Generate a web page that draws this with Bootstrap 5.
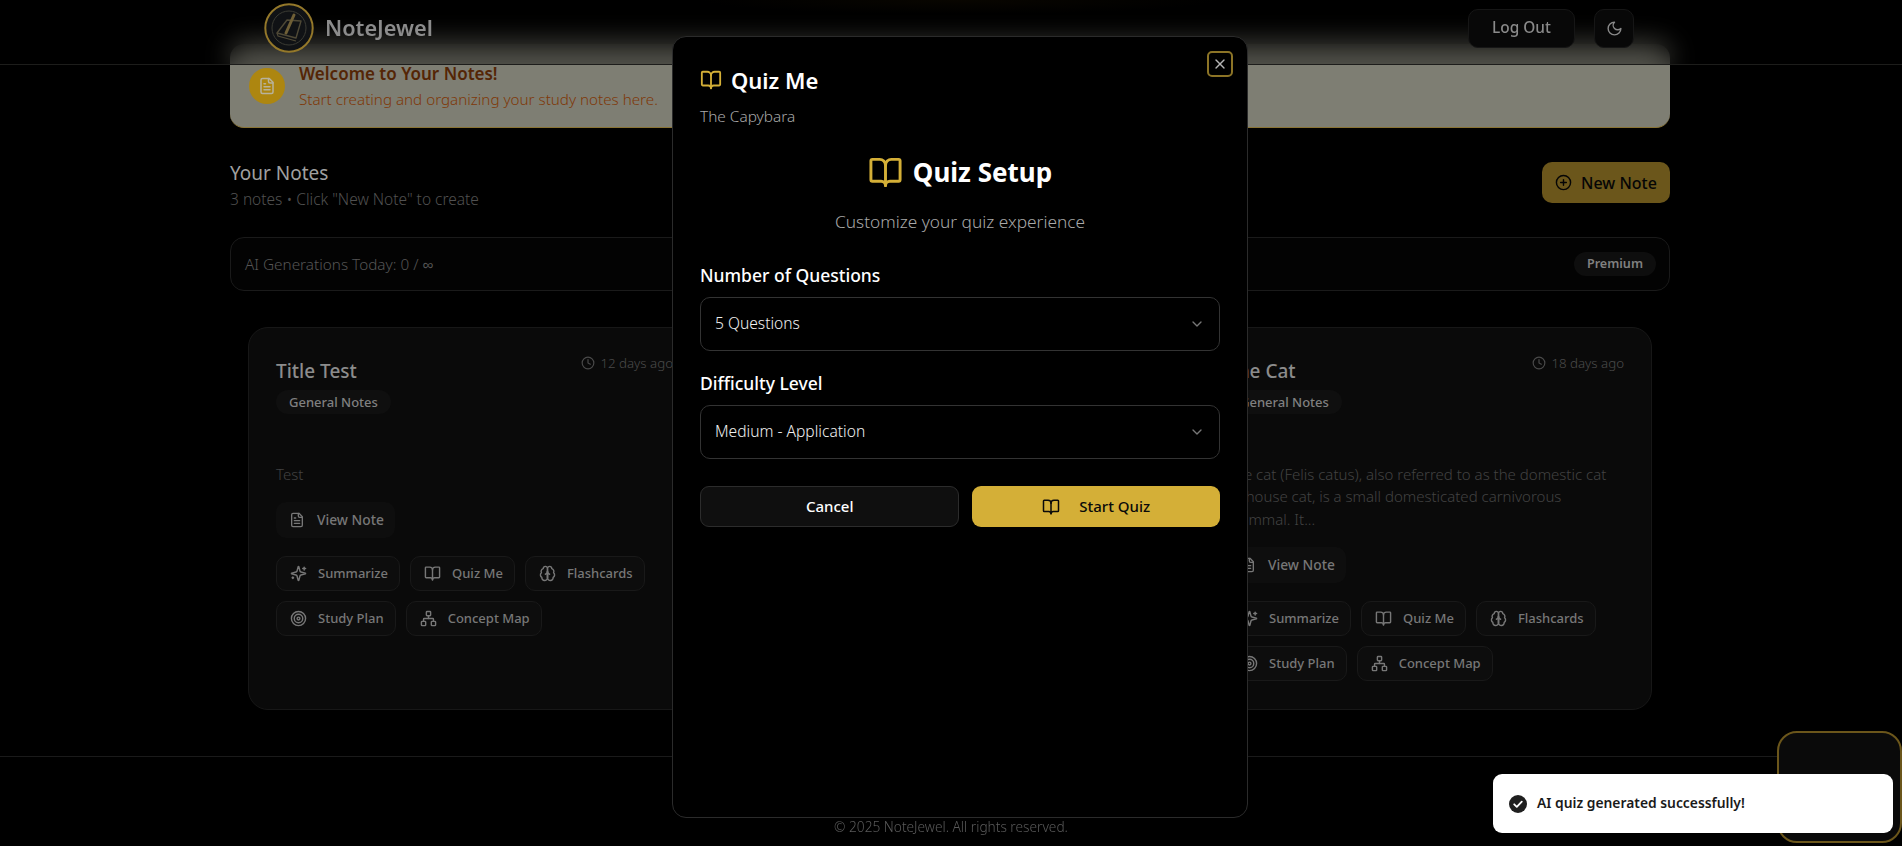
<!DOCTYPE html>
<html lang="en">
<head>
<meta charset="utf-8">
<title>NoteJewel</title>
<link href="https://cdn.jsdelivr.net/npm/bootstrap@5.3.0/dist/css/bootstrap.min.css" rel="stylesheet">
<style>
html,body{height:846px;overflow:hidden;background:#000;}
body{font-family:"Noto Sans",sans-serif;color:#aaa;}
svg.ic{fill:none;stroke:currentColor;stroke-width:2;stroke-linecap:round;stroke-linejoin:round;flex:none;}
.topbar{position:fixed;top:0;left:0;right:0;height:65px;z-index:10;background:radial-gradient(ellipse 260px 14px at 960px 0,rgba(60,40,0,.14),transparent),rgba(0,0,0,.35);backdrop-filter:blur(14px);border-bottom:1px solid #1d1d1b;padding:0 268px 8px 264px;}
.brand-text{font-size:21.7px;font-weight:600;color:#8c8c8c;margin-left:11px;}
.top-btn{height:39px;background:#080808;border:1px solid #161616;border-radius:10px;color:#8a8a8a;font-size:15.4px;font-weight:500;}
.logout{width:107px;}.moon{width:40px;margin-left:19px;}
.page-wrap{width:1440px;margin-left:230px;padding-top:44px;}
.welcome{height:84px;background:#7e7e73;border-bottom:1px solid #8a7434;border-radius:14px;padding:0 19px;gap:14px;}
.welcome-dot{width:36px;height:36px;border-radius:50%;background:#ad8610;color:#b8b29c;}
.welcome h2{font-size:17px;font-weight:600;color:#542505;margin:0 0 2px;line-height:24px;}
.welcome p{font-size:15.2px;font-weight:300;color:#7e3808;margin:0;line-height:22px;}
.head-row{margin-top:31px;height:78px;}
.notes-title{font-size:19px;font-weight:400;color:#a0a0a0;line-height:28px;margin:0;}
.notes-sub{font-size:15.5px;font-weight:300;color:#505050;margin:0;line-height:22px;margin-top:1px;}
.new-note{width:128px;height:41px;background:#6b561b;color:#050505;border-radius:10px;font-size:16px;font-weight:500;gap:9px;margin-top:3px;}
.stat-bar{height:54px;background:#030303;border:1px solid #1a1a1a;border-radius:14px;padding:0 13px 0 14px;font-size:15.3px;font-weight:300;color:#555;}
.prem{background:#0e0e0e;color:#808080;font-size:12.6px;font-weight:600;border-radius:20px;height:24px;padding:0 13px;}
.note-grid{display:grid;grid-template-columns:repeat(3,453px);gap:22.5px;margin:36px 18px 0;}
.note-tile{height:383px;background:#0a0a0a;border:1px solid #171717;border-radius:20px;padding:26px 27px;}
.note-name{font-size:19px;font-weight:500;color:#8c8c8c;line-height:34px;margin:0;}
.note-age{font-size:13.3px;font-weight:300;color:#4a4a4a;gap:5px;line-height:20px;margin-top:-1px;}
.chip{display:inline-block;background:#0f0f0f;color:#808080;font-size:13px;font-weight:500;border-radius:12px;height:24px;line-height:24px;padding:0 13px;margin-top:2px;}
.note-body{font-size:15px;font-weight:300;color:#424242;line-height:22.4px;margin:49px 0 17px;}
.act{height:36px;background:#0e0e0e;border-radius:10px;color:#777;font-size:13.8px;font-weight:500;padding:0 11px 0 13px;gap:12px;white-space:nowrap;border:0;}
.act-row{gap:10px;margin-top:18px;}
.tool{height:35px;background:#0d0d0d;border:1px solid #191919;border-radius:10px;color:#777;font-size:13px;font-weight:500;padding:0 11px 0 13px;gap:11px;white-space:nowrap;}
.pagefoot{position:fixed;left:0;right:0;top:756px;height:90px;border-top:1px solid #1a1a1a;text-align:center;padding-top:60px;font-size:13.7px;font-weight:300;color:#5a5a5a;}
.float-box{position:fixed;left:1777px;top:731px;width:125px;height:112px;background:#0a0a0a;border:2px solid #6b561b;border-radius:20px;z-index:20;}
.toasty{position:fixed;left:1493px;top:774px;width:400px;height:59px;background:#fff;border-radius:9px;z-index:1100;padding:0 16px;gap:10px;color:#1a1a1a;font-size:13.85px;font-weight:600;}
.quiz-modal{position:fixed;left:672px;top:36px;width:576px;height:782px;background:#000;border:1px solid #2b2b2b;border-radius:14px;z-index:1060;padding:0 27px;color:#fff;}
.close-x{position:absolute;right:14px;top:14px;width:26px;height:26px;background:#000;border:2px solid #8c7426;border-radius:5px;color:#b5b5b5;padding:0;}
.quiz-title{font-size:22px;font-weight:600;line-height:32px;margin:27px 0 0;gap:9px;color:#fff;}
.gold{color:#d4af37;}
.quiz-sub{font-size:15.4px;font-weight:300;color:#a8a8a8;line-height:20px;margin:11px 0 0;}
.setup-h{font-size:26px;font-weight:700;line-height:36px;margin:27px 0 0;gap:10px;color:#fff;}
.setup-p{font-size:17.3px;font-weight:300;color:#a8a8a8;text-align:center;line-height:24px;margin:20px 0 0;}
.quiz-form{margin-top:29px;}
.lbl{font-size:17.5px;font-weight:500;color:#fff;display:block;line-height:24px;margin:0 0 10px;}
.lbl-next{margin-top:20px;}
.sel{height:54px;background:#000;border:1px solid #333;border-radius:10px;padding:0 14px;font-size:15.6px;font-weight:300;color:#f0f0f0;}
.chev{color:#777;}
.btn-row{gap:13px;margin-top:27px;}
.b-cancel{flex:259 1 0;height:41px;background:#0f0f0f;border:1px solid #2c2c2c;border-radius:9px;color:#fff;font-size:15px;font-weight:500;}
.b-start{flex:248 1 0;height:41px;background:#d4af37;border:0;border-radius:9px;color:#0a0a0a;font-size:15px;font-weight:500;gap:19px;}
</style>
</head>
<body>
<svg width="0" height="0" class="position-absolute">
<defs>
<symbol id="i-book" viewBox="0 0 24 24"><path d="M12 7v14"/><path d="M3 18a1 1 0 0 1-1-1V4a1 1 0 0 1 1-1h5a4 4 0 0 1 4 4 4 4 0 0 1 4-4h5a1 1 0 0 1 1 1v13a1 1 0 0 1-1 1h-6a3 3 0 0 0-3 3 3 3 0 0 0-3-3z"/></symbol>
<symbol id="i-file" viewBox="0 0 24 24"><path d="M15 2H6a2 2 0 0 0-2 2v16a2 2 0 0 0 2 2h12a2 2 0 0 0 2-2V7z"/><path d="M14 2v4a2 2 0 0 0 2 2h4"/><path d="M10 9H8"/><path d="M16 13H8"/><path d="M16 17H8"/></symbol>
<symbol id="i-clock" viewBox="0 0 24 24"><circle cx="12" cy="12" r="10"/><path d="M12 6v6l4 2"/></symbol>
<symbol id="i-spark" viewBox="0 0 24 24"><path d="M9.94 15.5A2 2 0 0 0 8.5 14.06l-6.14-1.58a.5.5 0 0 1 0-.96L8.5 9.94A2 2 0 0 0 9.94 8.5l1.58-6.14a.5.5 0 0 1 .96 0l1.58 6.14a2 2 0 0 0 1.44 1.44l6.14 1.58a.5.5 0 0 1 0 .96l-6.14 1.58a2 2 0 0 0-1.44 1.44l-1.58 6.14a.5.5 0 0 1-.96 0z"/><path d="M20 3v4"/><path d="M22 5h-4"/><path d="M4 17v2"/><path d="M5 18H3"/></symbol>
<symbol id="i-brain" viewBox="0 0 24 24"><path d="M12 5a3 3 0 1 0-5.997.125 4 4 0 0 0-2.526 5.77 4 4 0 0 0 .556 6.588A4 4 0 1 0 12 18z"/><path d="M12 5a3 3 0 1 1 5.997.125 4 4 0 0 1 2.526 5.77 4 4 0 0 1-.556 6.588A4 4 0 1 1 12 18z"/><path d="M15 13a4.5 4.5 0 0 1-3-4 4.5 4.5 0 0 1-3 4"/><path d="M12 18V9"/></symbol>
<symbol id="i-target" viewBox="0 0 24 24"><circle cx="12" cy="12" r="10"/><circle cx="12" cy="12" r="6"/><circle cx="12" cy="12" r="2"/></symbol>
<symbol id="i-net" viewBox="0 0 24 24"><rect x="16" y="16" width="6" height="6" rx="1"/><rect x="2" y="16" width="6" height="6" rx="1"/><rect x="9" y="2" width="6" height="6" rx="1"/><path d="M5 16v-3a1 1 0 0 1 1-1h12a1 1 0 0 1 1 1v3"/><path d="M12 12V8"/></symbol>
<symbol id="i-chev" viewBox="0 0 24 24"><path d="m6 9 6 6 6-6"/></symbol>
</defs>
</svg>

<nav class="topbar d-flex align-items-center">
  <svg width="50" height="50" viewBox="0 0 50 50" aria-label="NoteJewel logo">
    <circle cx="25" cy="25" r="23.7" fill="#101215" stroke="#94782a" stroke-width="2"/>
    <circle cx="25" cy="25" r="17" fill="none" stroke="#3b3b33" stroke-width="1"/>
    <path d="M23 17l14 1-5 17-19-5z" fill="none" stroke="#4f4936" stroke-width="1.4" stroke-linejoin="round"/>
    <path d="M13 30l1 3 18 5" fill="none" stroke="#4f4936" stroke-width="1.2"/>
    <path d="M22 30L30 12" stroke="#6f5f36" stroke-width="3" stroke-linecap="round"/>
  </svg>
  <span class="brand-text">NoteJewel</span>
  <div class="ms-auto d-flex align-items-center">
    <button class="btn top-btn logout d-flex align-items-center justify-content-center">Log Out</button>
    <button class="btn top-btn moon d-flex align-items-center justify-content-center p-0" aria-label="Theme"><svg class="ic" width="17" height="17" viewBox="0 0 24 24"><path d="M12 3a6 6 0 0 0 9 9 9 9 0 1 1-9-9Z"/></svg></button>
  </div>
</nav>

<main class="page-wrap">
  <section class="welcome d-flex align-items-center">
    <span class="welcome-dot d-flex align-items-center justify-content-center"><svg class="ic" width="18" height="18"><use href="#i-file"/></svg></span>
    <div>
      <h2>Welcome to Your Notes!</h2>
      <p>Start creating and organizing your study notes here.</p>
    </div>
  </section>

  <div class="head-row d-flex justify-content-between align-items-start">
    <div>
      <h3 class="notes-title">Your Notes</h3>
      <p class="notes-sub">3 notes • Click "New Note" to create</p>
    </div>
    <button class="btn new-note d-flex align-items-center justify-content-center p-0"><svg class="ic" width="17" height="17" viewBox="0 0 24 24"><circle cx="12" cy="12" r="10"/><path d="M8 12h8"/><path d="M12 8v8"/></svg>New Note</button>
  </div>

  <div class="stat-bar d-flex align-items-center justify-content-between">
    <span>AI Generations Today: 0 / ∞</span>
    <span class="prem d-flex align-items-center">Premium</span>
  </div>

  <div class="note-grid">
    <article class="note-tile">
      <div class="d-flex justify-content-between align-items-start">
        <div><h4 class="note-name">Title Test</h4><span class="chip">General Notes</span></div>
        <span class="note-age d-flex align-items-center"><svg class="ic" width="14" height="14"><use href="#i-clock"/></svg>12 days ago</span>
      </div>
      <p class="note-body">Test</p>
      <button class="btn act d-inline-flex align-items-center"><svg class="ic" width="16" height="16"><use href="#i-file"/></svg>View Note</button>
      <div class="act-row d-flex flex-wrap">
        <button class="btn tool d-inline-flex align-items-center"><svg class="ic" width="17" height="17"><use href="#i-spark"/></svg>Summarize</button>
        <button class="btn tool d-inline-flex align-items-center"><svg class="ic" width="17" height="17"><use href="#i-book"/></svg>Quiz Me</button>
        <button class="btn tool d-inline-flex align-items-center"><svg class="ic" width="17" height="17"><use href="#i-brain"/></svg>Flashcards</button>
        <button class="btn tool d-inline-flex align-items-center"><svg class="ic" width="17" height="17"><use href="#i-target"/></svg>Study Plan</button>
        <button class="btn tool d-inline-flex align-items-center"><svg class="ic" width="17" height="17"><use href="#i-net"/></svg>Concept Map</button>
      </div>
    </article>
    <article class="note-tile"></article>
    <article class="note-tile">
      <div class="d-flex justify-content-between align-items-start">
        <div><h4 class="note-name">The Cat</h4><span class="chip">General Notes</span></div>
        <span class="note-age d-flex align-items-center"><svg class="ic" width="14" height="14"><use href="#i-clock"/></svg>18 days ago</span>
      </div>
      <p class="note-body">The cat (Felis catus), also referred to as the domestic cat or house cat, is a small domesticated carnivorous mammal. It...</p>
      <button class="btn act d-inline-flex align-items-center"><svg class="ic" width="16" height="16"><use href="#i-file"/></svg>View Note</button>
      <div class="act-row d-flex flex-wrap">
        <button class="btn tool d-inline-flex align-items-center"><svg class="ic" width="17" height="17"><use href="#i-spark"/></svg>Summarize</button>
        <button class="btn tool d-inline-flex align-items-center"><svg class="ic" width="17" height="17"><use href="#i-book"/></svg>Quiz Me</button>
        <button class="btn tool d-inline-flex align-items-center"><svg class="ic" width="17" height="17"><use href="#i-brain"/></svg>Flashcards</button>
        <button class="btn tool d-inline-flex align-items-center"><svg class="ic" width="17" height="17"><use href="#i-target"/></svg>Study Plan</button>
        <button class="btn tool d-inline-flex align-items-center"><svg class="ic" width="17" height="17"><use href="#i-net"/></svg>Concept Map</button>
      </div>
    </article>
  </div>
</main>

<footer class="pagefoot"><span>© 2025 NoteJewel. All rights reserved.</span></footer>
<div class="float-box"></div>

<div class="quiz-modal" role="dialog">
  <button class="close-x d-flex align-items-center justify-content-center" aria-label="Close"><svg class="ic" width="16" height="16" viewBox="0 0 24 24"><path d="M18 6 6 18"/><path d="m6 6 12 12"/></svg></button>
  <h2 class="quiz-title d-flex align-items-center"><svg class="ic gold" width="22" height="22"><use href="#i-book"/></svg>Quiz Me</h2>
  <p class="quiz-sub">The Capybara</p>
  <h3 class="setup-h d-flex align-items-center justify-content-center"><svg class="ic gold" width="35" height="35"><use href="#i-book"/></svg>Quiz Setup</h3>
  <p class="setup-p">Customize your quiz experience</p>
  <form class="quiz-form">
    <label class="lbl">Number of Questions</label>
    <div class="sel d-flex align-items-center justify-content-between">5 Questions<svg class="ic chev" width="16" height="16"><use href="#i-chev"/></svg></div>
    <label class="lbl lbl-next">Difficulty Level</label>
    <div class="sel d-flex align-items-center justify-content-between">Medium - Application<svg class="ic chev" width="16" height="16"><use href="#i-chev"/></svg></div>
    <div class="btn-row d-flex">
      <button type="button" class="btn b-cancel">Cancel</button>
      <button type="button" class="btn b-start d-flex align-items-center justify-content-center"><svg class="ic" width="18" height="18"><use href="#i-book"/></svg>Start Quiz</button>
    </div>
  </form>
</div>

<div class="toasty d-flex align-items-center">
  <svg width="18" height="18" viewBox="0 0 18 18" class="flex-shrink-0"><circle cx="9" cy="9" r="9" fill="#1f1f1f"/><path d="M5.2 9.3l2.6 2.5 5-5.2" fill="none" stroke="#fff" stroke-width="1.8" stroke-linecap="round" stroke-linejoin="round"/></svg>
  AI quiz generated successfully!
</div>
<script src="https://cdn.jsdelivr.net/npm/bootstrap@5.3.0/dist/js/bootstrap.bundle.min.js"></script>
</body>
</html>
